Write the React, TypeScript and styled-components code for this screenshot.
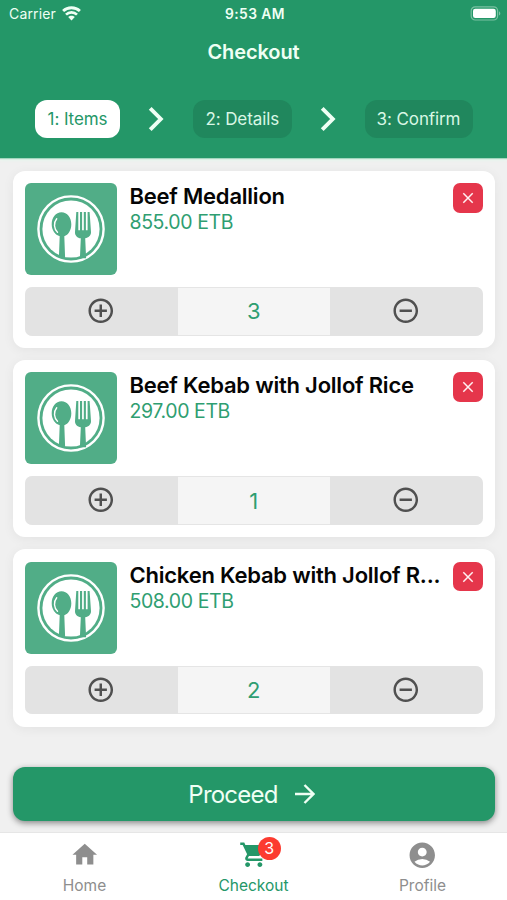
import React from 'react';
import styled, { createGlobalStyle } from 'styled-components';
import {
  MdAccountCircle,
  MdAddCircleOutline,
  MdHome,
  MdRemoveCircleOutline,
  MdShoppingCart,
} from 'react-icons/md';

const GREEN = '#249768';

const GlobalStyle = createGlobalStyle`
  * { box-sizing: border-box; }
  body {
    margin: 0;
    font-family: Inter, "Liberation Sans", sans-serif;
    background: #f0f0f0;
  }
  button { font: inherit; border: 0; padding: 0; margin: 0; }
  svg { display: block; flex: none; }
`;

const Screen = styled.div`
  width: 507px;
  height: 900px;
  display: flex;
  flex-direction: column;
  background: #f0f0f0;
  overflow: hidden;
`;

const Header = styled.header`
  height: 158px;
  flex: none;
  background: ${GREEN};
  color: #effff4;
  box-shadow: 0 1px 1px rgba(36, 151, 104, 0.35), 0 2px 3px rgba(225, 250, 235, 0.9);
`;

const StatusBar = styled.div`
  height: 28px;
  display: grid;
  grid-template-columns: 1fr auto 1fr;
  align-items: center;
  padding: 0 6px 0 9px;
`;

const Carrier = styled.div`
  display: flex;
  align-items: center;
  gap: 6px;
  height: 26px;
  margin-top: -2px;
  font-size: 14px;
  letter-spacing: 0.15px;
`;

const Clock = styled.div`
  font-size: 13.8px;
  font-weight: 600;
  letter-spacing: 0.45px;
`;

const Battery = styled.div`
  display: flex;
  justify-content: flex-end;
  padding-bottom: 1px;
`;

const Title = styled.h1`
  margin: 0;
  height: 48px;
  line-height: 49px;
  text-align: center;
  font-size: 20px;
  font-weight: 600;
  letter-spacing: -0.1px;
`;

const Steps = styled.nav`
  display: flex;
  align-items: center;
  padding: 24px 34.5px 0 35px;
  justify-content: space-between;
`;

const Step = styled.div<{ $active?: boolean; $width: number }>`
  width: ${(p) => p.$width}px;
  height: 38px;
  line-height: 38px;
  border-radius: 12px;
  text-align: center;
  font-size: 17px;
  letter-spacing: -0.1px;
  white-space: nowrap;
  color: ${(p) => (p.$active ? GREEN : '#d9f7e5')};
  background: ${(p) => (p.$active ? '#fff' : '#20875d')};
`;

const List = styled.main`
  flex: none;
  display: flex;
  flex-direction: column;
  gap: 12px;
  padding: 12.5px 12.5px 0 13px;
`;

const Card = styled.article`
  height: 177.4px;
  padding: 12.5px 12px 0;
  border-radius: 12px;
  background: #fff;
  box-shadow: 0 2px 12px rgba(0, 0, 0, 0.06);
`;

const CardTop = styled.div`
  display: flex;
  align-items: flex-start;
  height: 104px;
`;

const Info = styled.div`
  flex: 1;
  min-width: 0;
  padding: 0 12px 0 12.5px;
`;

const Name = styled.h2`
  margin: 0;
  height: 26px;
  line-height: 27px;
  font-size: 22px;
  font-weight: 600;
  letter-spacing: -0.22px;
  color: #050505;
  white-space: nowrap;
`;

const Price = styled.div`
  height: 24px;
  line-height: 26px;
  font-size: 19.5px;
  letter-spacing: -0.4px;
  color: #2f9e71;
`;

const Remove = styled.button`
  width: 29.5px;
  height: 29.5px;
  flex: none;
  display: grid;
  place-items: center;
  border-radius: 7px;
  background: #e5364b;
`;

const Stepper = styled.div`
  height: 48.5px;
  display: grid;
  grid-template-columns: 1fr 1fr 1fr;
  border-radius: 7px;
  overflow: hidden;
  background: #f5f5f5;
`;

const StepButton = styled.button`
  display: grid;
  place-items: center;
  padding: 0 1.5px 1px 0;
  background: #e3e3e3;
  color: #505050;
`;

const Quantity = styled.div`
  display: grid;
  place-items: center;
  font-size: 22px;
  color: #2f9e71;
  border: solid #e5e5e5;
  border-width: 1px 0;
`;

const Footer = styled.div`
  flex: 1;
  display: flex;
  align-items: flex-end;
  padding: 0 12.5px 11.5px 13px;
`;

const Proceed = styled.button`
  width: 100%;
  height: 54px;
  display: flex;
  align-items: center;
  justify-content: center;
  gap: 17.5px;
  padding: 1px 4px 0 0;
  border-radius: 12px;
  background: ${GREEN};
  color: #effff4;
  font-size: 24px;
  letter-spacing: -0.78px;
  box-shadow: 0 2px 6px rgba(0, 0, 0, 0.45);
`;

const TabBar = styled.nav`
  height: 68px;
  flex: none;
  display: grid;
  grid-template-columns: repeat(3, 1fr);
  background: #fff;
  border-top: 1px solid #e6e6e6;
`;

const Tab = styled.div<{ $active?: boolean }>`
  display: flex;
  flex-direction: column;
  align-items: center;
  padding-top: 6.5px;
  font-size: 15.5px;
  line-height: 20px;
  color: ${(p) => (p.$active ? GREEN : '#8e8e8e')};
`;

const TabIcon = styled.div`
  position: relative;
  height: 36.5px;
`;

const Badge = styled.span`
  position: absolute;
  left: 19px;
  top: -2.5px;
  width: 23px;
  height: 23px;
  border-radius: 50%;
  background: #fc3b30;
  color: #fff;
  font-size: 16px;
  line-height: 23px;
  text-align: center;
`;

const Wifi = () => (
  <svg width="19" height="15" viewBox="0 0 19 15" fill="none" stroke="#effff4">
    <path d="M1.1 5.1C5.7.6 13.3.6 17.9 5.1" strokeWidth="2.8" />
    <path d="M4 8.6c3.1-3 7.9-3 11 0" strokeWidth="2.7" />
    <path d="M9.5 14.4 6.2 11.1c1.8-1.8 4.8-1.8 6.6 0z" fill="#effff4" stroke="none" />
  </svg>
);

const BatteryIcon = () => (
  <svg width="31" height="15" viewBox="0 0 31 15">
    <rect x="1.2" y=".8" width="26.4" height="13.2" rx="4" fill="none" stroke="#7ac1a2" strokeWidth="1.2" />
    <rect x="3" y="2.7" width="22.8" height="9.4" rx="2.3" fill="#fff" />
    <path d="M29 5.2c1.8.8 1.8 3.6 0 4.4z" fill="#7ac1a2" />
  </svg>
);

const Chevron = () => (
  <svg width="16" height="26" viewBox="0 0 16 26" fill="none" stroke="#effff4" strokeWidth="3.9">
    <path d="m2.2 2.3 10.6 10.7L2.2 23.7" strokeLinejoin="miter" />
  </svg>
);

const PlateIcon = () => (
  <svg width="92" height="92" viewBox="0 0 92 92">
    <rect width="92" height="92" rx="6" fill="#51ad87" />
    <circle cx="46" cy="46" r="32.6" fill="none" stroke="#fff" strokeWidth="2.4" />
    <circle cx="46" cy="46" r="28.6" fill="#fff" />
    <g fill="#51ad87">
      <path d="M36.5 29.2c5.7 0 9.8 5.4 9.8 12 0 6-3 10.6-7 12l.8 21.3h-6.2l.8-21.3c-4.5-1.4-8-6-8-12 0-6.6 4.1-12 9.8-12z" />
      <path d="M51.3 29h2v18.2h1.7V29h2.1v18.2h1.7V29h2.1v18.2h1.7V29h2L66 49c.2 3.4-2.4 5.7-5.8 6.3l.9 20h-6.2l.9-20c-3.5-.6-6-2.9-5.8-6.3z" />
    </g>
    <path d="M31.7 35.8c-3.3 4-2.8 10 .8 13.4" fill="none" stroke="#fff" strokeWidth="1.4" strokeLinecap="round" />
  </svg>
);

const CloseIcon = () => (
  <svg width="12" height="12" viewBox="0 0 12 12" stroke="#fff0f1" strokeWidth="1.5">
    <path d="m1.3 1.3 9.4 9.4M10.7 1.3 1.3 10.7" />
  </svg>
);

const ArrowIcon = () => (
  <svg width="20" height="20" viewBox="0 0 20 20" fill="none" stroke="#effff4" strokeWidth="2.4">
    <path d="M0 10h18M9.5 1l9 9-9 9" />
  </svg>
);

const items = [
  { name: 'Beef Medallion', price: '855.00 ETB', quantity: 3 },
  { name: 'Beef Kebab with Jollof Rice', price: '297.00 ETB', quantity: 1 },
  { name: 'Chicken Kebab with Jollof R...', price: '508.00 ETB', quantity: 2 },
];

export default function App() {
  return (
    <Screen>
      <GlobalStyle />
      <Header>
        <StatusBar>
          <Carrier>
            Carrier
            <Wifi />
          </Carrier>
          <Clock>9:53 AM</Clock>
          <Battery>
            <BatteryIcon />
          </Battery>
        </StatusBar>
        <Title>Checkout</Title>
        <Steps>
          <Step $active $width={85}>1: Items</Step>
          <Chevron />
          <Step $width={99}>2: Details</Step>
          <Chevron />
          <Step $width={108}>3: Confirm</Step>
        </Steps>
      </Header>
      <List>
        {items.map((item) => (
          <Card key={item.name}>
            <CardTop>
              <PlateIcon />
              <Info>
                <Name>{item.name}</Name>
                <Price>{item.price}</Price>
              </Info>
              <Remove aria-label="Remove">
                <CloseIcon />
              </Remove>
            </CardTop>
            <Stepper>
              <StepButton aria-label="Increase">
                <MdAddCircleOutline size={29.5} />
              </StepButton>
              <Quantity>{item.quantity}</Quantity>
              <StepButton aria-label="Decrease">
                <MdRemoveCircleOutline size={29.5} />
              </StepButton>
            </Stepper>
          </Card>
        ))}
      </List>
      <Footer>
        <Proceed>
          Proceed
          <ArrowIcon />
        </Proceed>
      </Footer>
      <TabBar>
        <Tab>
          <TabIcon>
            <MdHome size={29.5} />
          </TabIcon>
          Home
        </Tab>
        <Tab $active>
          <TabIcon>
            <MdShoppingCart size={29.5} />
            <Badge>3</Badge>
          </TabIcon>
          Checkout
        </Tab>
        <Tab>
          <TabIcon>
            <MdAccountCircle size={30.5} />
          </TabIcon>
          Profile
        </Tab>
      </TabBar>
    </Screen>
  );
}
